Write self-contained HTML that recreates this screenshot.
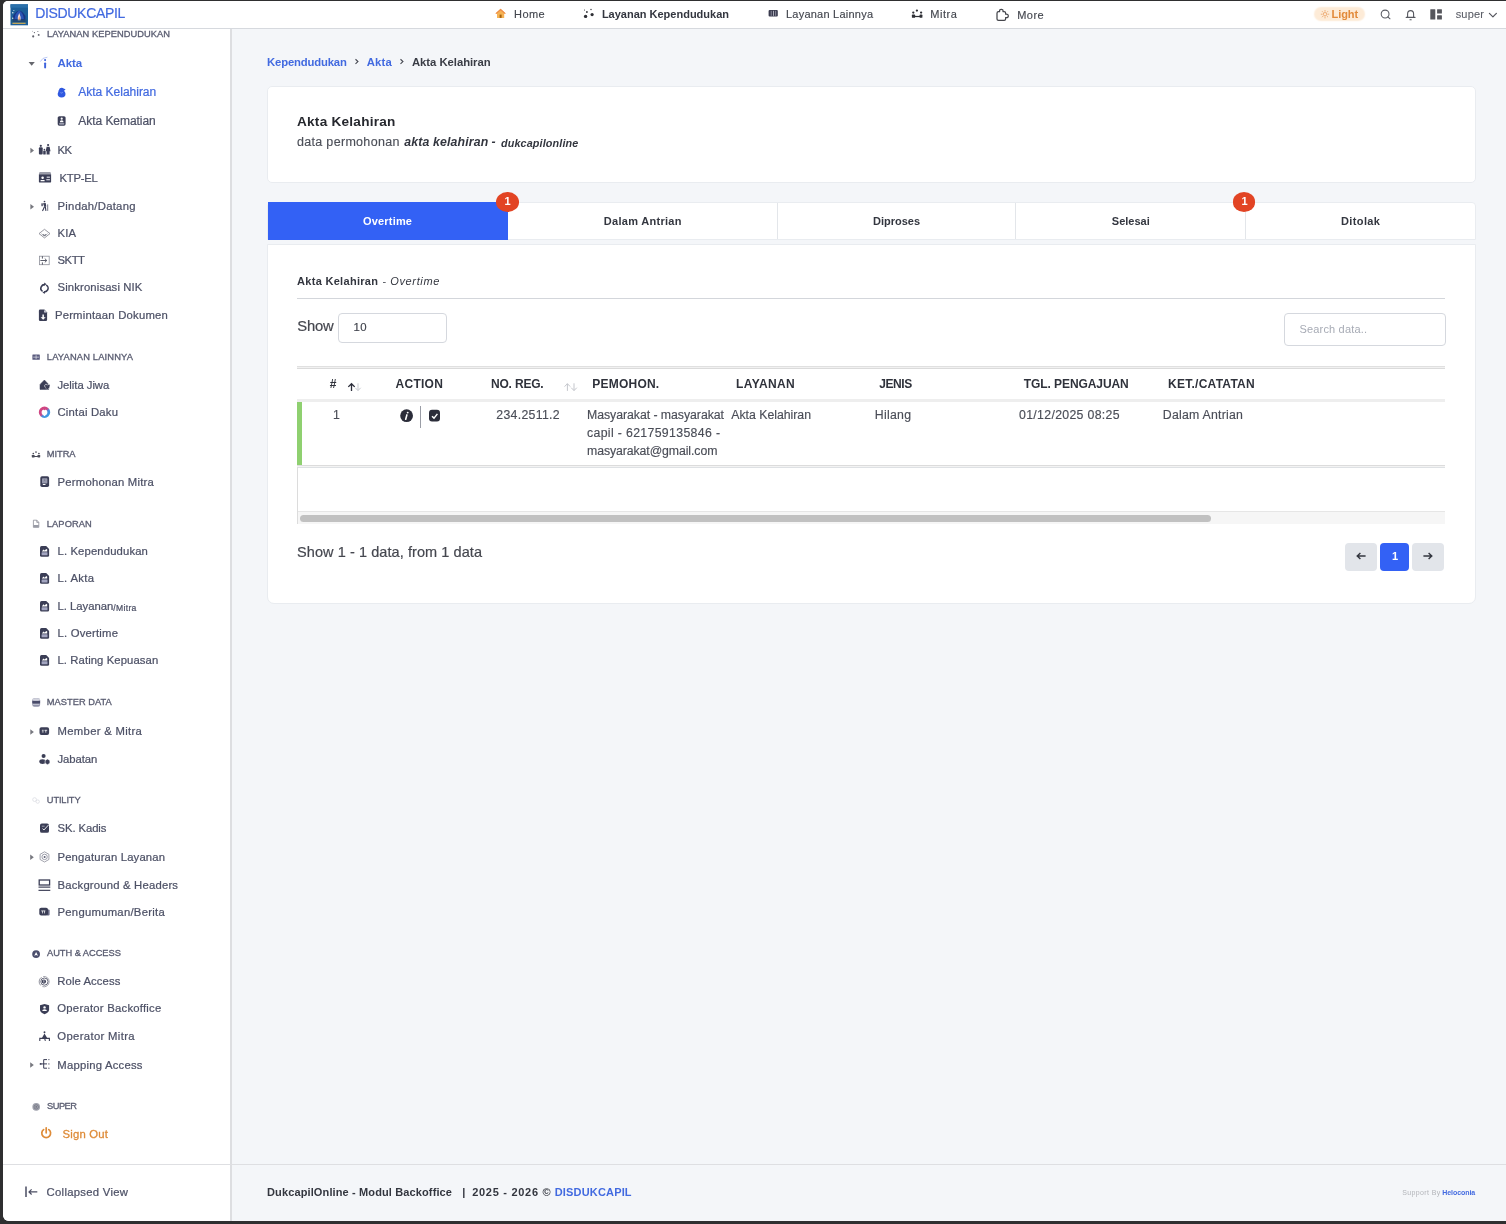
<!DOCTYPE html>
<html lang="id">
<head>
<meta charset="utf-8">
<title>Akta Kelahiran - DukcapilOnline Backoffice</title>
<style>
html,body{margin:0;padding:0;}
body{width:1506px;height:1224px;overflow:hidden;background:#2f2f30;font-family:"Liberation Sans",sans-serif;position:relative;}
#win{position:absolute;left:0;top:0;width:1506px;height:1224px;background:#f4f6f9;clip-path:inset(1px 0 3px 3px round 5px 0 0 6px);}
.b{position:absolute;box-sizing:border-box;}
.t{position:absolute;white-space:pre;display:block;}
svg{position:absolute;overflow:visible;}
</style>
</head>
<body>
<div id="win">
<!-- header -->
<div class="b" style="left:0;top:0;width:1506px;height:28px;background:#fff;"></div>
<div class="b" style="left:0;top:28px;width:1506px;height:1px;background:#d6d9de;"></div>
<!-- sidebar -->
<div class="b" style="left:0;top:29px;width:230px;height:1195px;background:#fff;"></div>
<div class="b" style="left:230px;top:29px;width:1.6px;height:1195px;background:#dddee1;"></div>
<div class="b" style="left:0;top:1164px;width:1506px;height:1px;background:#dedfe2;"></div>
<!-- card 1 -->
<div class="b" style="left:267px;top:86px;width:1209px;height:96.5px;background:#fff;border:1px solid #e9ecf0;border-radius:5px;"></div>
<!-- tabs -->
<div class="b" style="left:267px;top:202px;width:1209px;height:38px;background:#fff;border:1px solid #e9ecf0;border-radius:4px 4px 0 0;"></div>
<div class="b" style="left:268px;top:202.4px;width:239.5px;height:38px;background:#3361f5;"></div>
<div class="b" style="left:777px;top:203px;width:1px;height:36px;background:#e3e6ea;"></div>
<div class="b" style="left:1015px;top:203px;width:1px;height:36px;background:#e3e6ea;"></div>
<div class="b" style="left:1245px;top:203px;width:1px;height:36px;background:#e3e6ea;"></div>
<div class="b" style="left:496.2px;top:192.2px;width:22.6px;height:19.7px;border-radius:50%;background:#e24424;"></div>
<div class="b" style="left:1232.9px;top:192.2px;width:22.6px;height:19.7px;border-radius:50%;background:#e24424;"></div>
<!-- card 2 -->
<div class="b" style="left:267px;top:244px;width:1209px;height:360px;background:#fff;border:1px solid #e9ecf0;border-radius:0 0 7px 7px;"></div>
<div class="b" style="left:297px;top:298px;width:1148px;height:1px;background:#d3d6db;"></div>
<div class="b" style="left:338px;top:313px;width:109px;height:30px;background:#fff;border:1px solid #d5d8de;border-radius:4px;"></div>
<div class="b" style="left:1284px;top:313px;width:162px;height:33px;background:#fff;border:1px solid #d5d8de;border-radius:4px;"></div>
<!-- table -->
<div class="b" style="left:297px;top:366px;width:1148px;height:1px;background:#e0e0e0;"></div>
<div class="b" style="left:297px;top:367px;width:1148px;height:1px;background:#f1f1f1;"></div>
<div class="b" style="left:297px;top:368px;width:1148px;height:1px;background:#dbdbdb;"></div>
<div class="b" style="left:297px;top:399px;width:1148px;height:3px;background:#eeeeee;"></div>
<div class="b" style="left:297px;top:465px;width:1148px;height:1px;background:#dcdcdc;"></div>
<div class="b" style="left:297px;top:466px;width:1148px;height:1px;background:#f3f3f3;"></div>
<div class="b" style="left:297px;top:467px;width:1148px;height:1px;background:#dee1e4;"></div>
<div class="b" style="left:297px;top:402px;width:5px;height:63px;background:#8fd070;"></div>
<div class="b" style="left:297px;top:467px;width:1px;height:57px;background:#dcdcdc;"></div>
<div class="b" style="left:298px;top:511px;width:1147px;height:13px;background:#f6f6f6;border-top:1px solid #e6e6e6;"></div>
<div class="b" style="left:300px;top:515px;width:911px;height:7px;border-radius:4px;background:#c1c1c1;"></div>
<div class="b" style="left:420px;top:406px;width:1px;height:22px;background:#9a9da6;"></div>
<!-- pagination -->
<div class="b" style="left:1345px;top:543px;width:32px;height:27.5px;background:#e2e5ea;border-radius:4px;"></div>
<div class="b" style="left:1380px;top:543px;width:29px;height:27.5px;background:#3361f5;border-radius:4px;"></div>
<div class="b" style="left:1412px;top:543px;width:31.5px;height:27.5px;background:#e2e5ea;border-radius:4px;"></div>
<!-- light pill -->
<div class="b" style="left:1316px;top:9.4px;width:47.4px;height:9.2px;background:#fdebd7;border-radius:5px;box-shadow:0 0 1.5px 2px #fdebd7;"></div>
<svg width="1506" height="1224" viewBox="0 0 1506 1224" style="left:0;top:0;">
<!-- logo -->
<g>
<rect x="10.5" y="4.3" width="17.5" height="21" fill="#1d5f99"/>
<rect x="10.5" y="4.3" width="17.5" height="3.4" fill="#2a70aa"/>
<path d="M13 22 L13 16 Q19.2 5.5 25.4 16 L25.4 22 Z" fill="#1b3585"/>
<path d="M19.2 10.5 Q23.5 13 23.8 19 L14.6 19 Q14.9 13 19.2 10.5Z" fill="#2b55b5"/>
<path d="M19.2 13 Q21.2 17 20.6 20.5 L17.8 20.5 Q17.2 17 19.2 13Z" fill="#fbe3dc"/>
<path d="M19.2 16 Q20.2 18.5 19.9 20.5 L18.5 20.5 Q18.2 18.5 19.2 16Z" fill="#e8925a"/>
<rect x="12.4" y="22.6" width="13.2" height="1.4" fill="#c2a457"/>
<circle cx="12.8" cy="12.8" r="0.7" fill="#e8f0f5"/><circle cx="13.9" cy="10.4" r="0.5" fill="#e8f0f5"/><circle cx="12.7" cy="18.3" r="0.7" fill="#d8efd0"/>
<rect x="11.3" y="19.5" width="15.8" height="2.8" fill="#24546b" opacity=".6"/>
</g>
<!-- header: home -->
<g>
<path d="M495.6 13.2 L500.6 8.8 L505.6 13.2 L504.2 13.2 L504.2 17.9 L497 17.9 L497 13.2Z" fill="#f6b354"/>
<path d="M495.4 13.4 L500.6 8.8 L505.8 13.4 L504.8 13.9 L500.6 10.4 L496.4 13.9Z" fill="#ee8c4a"/>
<rect x="499.6" y="14.6" width="2" height="3.3" fill="#a6620f"/>
</g>
<!-- header: layanan kependudukan scatter -->
<g fill="#2f3036">
<circle cx="585.6" cy="16.4" r="1.7"/><circle cx="592.1" cy="14.6" r="1.6"/><circle cx="586.9" cy="12" r="0.9"/><circle cx="584.5" cy="10" r="0.55"/><circle cx="591" cy="9.5" r="0.7"/>
</g>
<!-- header: layanan lainnya -->
<g>
<rect x="768.6" y="10" width="9.2" height="6.5" rx="1" fill="#3a3b4e"/>
<rect x="770.8" y="10.8" width="0.7" height="5" fill="#a9aab8"/><rect x="773" y="10.8" width="0.8" height="5" fill="#c9cad4"/><rect x="775.4" y="10.8" width="0.7" height="5" fill="#a9aab8"/>
</g>
<!-- header: mitra -->
<g fill="#2f3036">
<circle cx="913.3" cy="12.6" r="1.15"/><circle cx="916.9" cy="10.6" r="1.15"/><circle cx="921.1" cy="12.6" r="1.15"/>
<rect x="911.9" y="14.6" width="3.2" height="3.2" rx=".6"/><rect x="919.6" y="14.6" width="2.8" height="3.2" rx=".6"/><rect x="913" y="15.9" width="8" height="1.2"/>
</g>
<!-- header: more (puzzle) -->
<path d="M997 19 L997 13.2 Q997 11.7 998.5 11.7 L999.6 11.7 Q999.2 9.3 1001.3 9.3 Q1003.4 9.3 1003 11.7 L1004.2 11.7 Q1005.6 11.7 1005.6 13.2 L1005.6 14.2 Q1008.3 13.8 1008.3 15.9 Q1008.3 18 1005.6 17.6 L1005.6 19 Q1005.6 20.4 1004.2 20.4 L998.5 20.4 Q997 20.4 997 19Z" fill="none" stroke="#45464c" stroke-width="1.25" stroke-linejoin="round"/>
<!-- header: sun -->
<g stroke="#eaa163" stroke-width=".8" fill="none">
<circle cx="1325" cy="14.2" r="1.7"/>
<path d="M1325 10v1.7M1325 16.7v1.7M1320.8 14.2h1.7M1327.5 14.2h1.7M1322 11.2l1.2 1.2M1326.8 16l1.2 1.2M1322 17.2l1.2-1.2M1326.8 12.4l1.2-1.2"/>
</g>
<!-- header: search -->
<g stroke="#5a5c63" stroke-width="1.05" fill="none" stroke-linecap="round"><circle cx="1385.1" cy="14" r="3.9"/><path d="M1387.9 16.8L1390 18.8"/></g>
<!-- header: bell -->
<g stroke="#55575e" stroke-width="1.1" fill="none" stroke-linecap="round" stroke-linejoin="round"><path d="M1406.2 17.4H1415M1407.6 17.4V14Q1407.6 10.6 1410.6 10.6Q1413.6 10.6 1413.6 14V17.4"/><path d="M1410 19.8h1.2"/></g>
<!-- header: grid -->
<g fill="#55565c"><rect x="1430.3" y="9.2" width="5" height="10.4" rx=".4"/><rect x="1437.1" y="9.2" width="4.8" height="4.4" rx=".4"/><rect x="1437.1" y="15.3" width="4.8" height="4.3" rx=".4"/></g>
<!-- header: chevron -->
<path d="M1489.4 13.3L1492.9 16.8L1496.4 13.3" fill="none" stroke="#55575e" stroke-width="1.2" stroke-linecap="round" stroke-linejoin="round"/>
<g fill="#5e5f6a"><circle cx="33.2" cy="36.4" r="1.05"/><circle cx="38.7" cy="34.9" r=".95"/><circle cx="34.4" cy="32.6" r=".65"/><circle cx="32.6" cy="31.2" r=".4"/><circle cx="37.9" cy="31.4" r=".5"/></g>
<path d="M28.6 62 L34.8 62 L31.7 65.7Z" fill="#66676d"/>
<path d="M40.3 61.6 Q42.2 57.4 47.4 57.2" fill="none" stroke="#8ea5ec" stroke-width=".6"/>
<circle cx="45.1" cy="60.1" r="1.05" fill="#3f63dd"/><rect x="44.15" y="62.5" width="1.95" height="5.9" rx=".8" fill="#3f63dd"/>
<g fill="#3059e0"><circle cx="61.7" cy="90.4" r="2.7"/><ellipse cx="61.6" cy="94.1" rx="3.9" ry="3.4"/><circle cx="64.6" cy="89.4" r=".7"/><circle cx="58.6" cy="91" r=".6"/></g><path d="M60.4 92.6 Q61.6 93.6 62.8 92.4" stroke="#9db3f5" stroke-width=".6" fill="none"/>
<rect x="57.7" y="116.2" width="7.9" height="9.5" rx="1.6" fill="#3b3e56"/><circle cx="61.7" cy="118.7" r="1.1" fill="#fff"/><path d="M59.8 122.2 Q59.8 120.3 61.7 120.3 Q63.6 120.3 63.6 122.2Z" fill="#fff"/><rect x="59.1" y="123.2" width="5.2" height="1.3" rx=".4" fill="#b9bbca"/>
<path d="M30.4 147.65 L34.0 150.4 L30.4 153.15Z" fill="#77787f"/>
<g fill="#3b3e56"><circle cx="40.8" cy="145.8" r="1.1"/><rect x="38.9" y="147.3" width="3.8" height="7.3" rx="1"/><circle cx="48.1" cy="145" r="1.1"/><path d="M46.6 146.7 h3 l.9 4.6 h-.9 v3.3 h-3 v-3.3 h-.9Z"/><circle cx="44.4" cy="149.7" r=".85"/><rect x="43.2" y="150.8" width="2.5" height="3.8" rx=".6"/></g>
<path d="M38.9 173.5 Q38.9 172.4 40.1 172.4 H49.9 Q51.1 172.4 51.1 173.5Z" fill="#3b3e56"/><path d="M38.9 174.3 H51.1 V181.4 Q51.1 182.6 49.9 182.6 H40.1 Q38.9 182.6 38.9 181.4Z" fill="#3b3e56"/><circle cx="42.6" cy="177.8" r="1.25" fill="#fff"/><rect x="40.5" y="180.1" width="4.2" height="1.1" rx=".5" fill="#fff"/><rect x="46.7" y="176.6" width="3.2" height="1.2" fill="#d6d7e0"/><rect x="46.3" y="179.2" width="3.6" height="1.1" fill="#e6e7ee"/>
<path d="M30.4 203.95 L34.0 206.7 L30.4 209.45Z" fill="#77787f"/>
<g fill="#3b3e56" stroke="#3b3e56"><circle cx="44.5" cy="201.5" r=".85" stroke="none"/><path d="M43 203.2 L45.7 203 L46.3 206.5 L44.3 206.8Z" stroke="none"/><rect x="41.3" y="203.2" width="1.6" height="3" rx=".4" stroke="none" fill="#5a5c70"/><path d="M44.6 206.4 L42.5 210.9M45.3 206.4 L45.9 210.9" stroke-width="1.1" fill="none"/><path d="M47.7 204.4 V210.9" stroke-width=".7" fill="none"/></g>
<path d="M39 233.6 L44.5 229.3 L50 233.6 L44.5 237.9Z" fill="none" stroke="#7d7f8a" stroke-width=".8" stroke-linejoin="round"/><path d="M41.6 233.6 Q44.5 238 47.4 233.6" fill="none" stroke="#8c8e98" stroke-width=".8"/><path d="M43.2 234.6 Q44.5 236 45.8 234.6" fill="none" stroke="#4b4d5e" stroke-width="1"/>
<rect x="39.4" y="256.2" width="9.8" height="8.5" fill="none" stroke="#8d8f99" stroke-width=".8"/><path d="M40.4 260.5 H46.6 M44.8 258.6 L46.8 260.5 L44.8 262.4 M42.4 256.2 V258.6 M42.4 262.4 V264.7" fill="none" stroke="#4a4c5a" stroke-width=".9"/>
<circle cx="44.5" cy="288.3" r="3.6" fill="none" stroke="#3b3e56" stroke-width="1.6" stroke-dasharray="9.7 1.61" transform="rotate(-62 44.5 288.3)"/><path d="M44.3 282.6 L46.6 284.3 L44 285.4Z M44.7 294 L42.4 292.3 L45 291.2Z" fill="#3b3e56"/>
<path d="M38.9 310.8 Q38.9 309.6 40.1 309.6 H44.4 L47.1 312.4 V319.7 Q47.1 320.9 45.9 320.9 H40.1 Q38.9 320.9 38.9 319.7Z" fill="#3b3e56"/><path d="M44.2 309.9 V312.6 H46.9Z" fill="#e3e4ec"/><path d="M42.4 314.6 H43.9 V317.2 H45.7 L43.15 319.8 L40.6 317.2 H42.4Z" fill="#fff"/>
<rect x="32.4" y="354.5" width="7.4" height="5.3" rx=".5" fill="#5a5b7e"/><path d="M33.2 357.15 H39 M36.1 355.2 V359.1" stroke="#e4e5ee" stroke-width=".7"/>
<path d="M40 384.5 L44.4 380 L48.7 384.4 V389.4 H40Z" fill="#3b3e56" stroke="#3b3e56" stroke-width=".5" stroke-linejoin="round"/><path d="M47.35 389.7 L44.9 386.9 Q44 385 45.6 384.3 Q46.7 384 47.35 385.2 Q48 384 49.1 384.3 Q50.7 385 49.8 386.9Z" fill="#3b3e56" stroke="#fff" stroke-width=".65"/><path d="M47.35 389.7 L45.2 387.1 L49.5 387.1Z" fill="#3b3e56"/>
<defs><linearGradient id="cg" x1="0" y1="0" x2="1" y2="1"><stop offset="0" stop-color="#d6407a"/><stop offset=".48" stop-color="#c64c8e"/><stop offset=".6" stop-color="#4a8ede"/><stop offset="1" stop-color="#38a0e6"/></linearGradient></defs><circle cx="44.5" cy="412.3" r="4.3" fill="#fff" stroke="url(#cg)" stroke-width="2.8"/><path d="M43.5 409 L44.5 410.6 L45.5 409Z" fill="#d2437c"/><path d="M42.7 414.5 L44.5 416.3 L46.3 414.5Z" fill="#fff"/>
<g fill="#4a4c58"><circle cx="33.3" cy="453.5" r=".85"/><circle cx="36" cy="452" r=".85"/><circle cx="38.9" cy="453.5" r=".85"/><rect x="31.8" y="455" width="2.8" height="2.4" rx=".4"/><rect x="37.5" y="455" width="2.7" height="2.4" rx=".4"/><rect x="33" y="456" width="6" height="1"/></g>
<rect x="40.3" y="476.3" width="8.8" height="10.7" rx="1.7" fill="#3b3e56"/><rect x="42" y="478.2" width="5.4" height="5.2" rx=".7" fill="#9799ad"/><rect x="42.7" y="483.9" width="2.9" height="1.2" rx=".5" fill="#fff"/><circle cx="44.7" cy="480" r=".6" fill="#5b5d72"/>
<path d="M33.4 520.2 H36.8 L38.8 522.4 V527.3 H33.4Z M36.8 520.2 V522.4 H38.8" fill="none" stroke="#8b8d97" stroke-width=".8" stroke-linejoin="round"/><rect x="33.4" y="525" width="5.4" height="2.3" fill="#9a9ca6"/>
<path d="M40 547.5 Q40 546.0 41.5 546.0 H46.2 L49.1 548.9 V555.2 Q49.1 556.7 47.6 556.7 H41.5 Q40 556.7 40 555.2Z" fill="#3b3e56"/><path d="M41.8 551.5 L43.5 549.4 L44.7 550.6 L46.2 548.9 L47.2 549.6 V551.5Z" fill="#fff"/><rect x="41.6" y="552.3" width="5.9" height="3" rx=".5" fill="#a3a5c0"/>
<path d="M40 574.6 Q40 573.1 41.5 573.1 H46.2 L49.1 576.0 V582.3 Q49.1 583.8 47.6 583.8 H41.5 Q40 583.8 40 582.3Z" fill="#3b3e56"/><path d="M41.8 578.6 L43.5 576.5 L44.7 577.7 L46.2 576.0 L47.2 576.7 V578.6Z" fill="#fff"/><rect x="41.6" y="579.4" width="5.9" height="3" rx=".5" fill="#a3a5c0"/>
<path d="M40 602.4 Q40 600.9 41.5 600.9 H46.2 L49.1 603.8 V610.1 Q49.1 611.6 47.6 611.6 H41.5 Q40 611.6 40 610.1Z" fill="#3b3e56"/><path d="M41.8 606.4 L43.5 604.3 L44.7 605.5 L46.2 603.8 L47.2 604.5 V606.4Z" fill="#fff"/><rect x="41.6" y="607.2" width="5.9" height="3" rx=".5" fill="#a3a5c0"/>
<path d="M40 629.5 Q40 628.0 41.5 628.0 H46.2 L49.1 630.9 V637.2 Q49.1 638.7 47.6 638.7 H41.5 Q40 638.7 40 637.2Z" fill="#3b3e56"/><path d="M41.8 633.5 L43.5 631.4 L44.7 632.6 L46.2 630.9 L47.2 631.6 V633.5Z" fill="#fff"/><rect x="41.6" y="634.3" width="5.9" height="3" rx=".5" fill="#a3a5c0"/>
<path d="M40 656.5 Q40 655.0 41.5 655.0 H46.2 L49.1 657.9 V664.2 Q49.1 665.7 47.6 665.7 H41.5 Q40 665.7 40 664.2Z" fill="#3b3e56"/><path d="M41.8 660.5 L43.5 658.4 L44.7 659.6 L46.2 657.9 L47.2 658.6 V660.5Z" fill="#fff"/><rect x="41.6" y="661.3" width="5.9" height="3" rx=".5" fill="#a3a5c0"/>
<rect x="32.3" y="698.3" width="7.8" height="8.4" rx="2" fill="#9092a9"/><ellipse cx="36.2" cy="699.7" rx="3.9" ry="1.4" fill="#d3d4de"/><rect x="32.3" y="700.9" width="7.8" height="2.5" fill="#494b69"/><rect x="33" y="704" width="6.4" height=".7" fill="#d3d4de"/>
<path d="M30.299999999999997 729.25 L33.9 732 L30.299999999999997 734.75Z" fill="#77787f"/>
<rect x="39.5" y="727.2" width="9.6" height="7.8" rx="1.9" fill="#3b3e56"/><path d="M41.9 730.3 H43.7 M41.9 731.9 H43.7 M44.5 730.3 H47.2 M45.8 730.3 V732.6" stroke="#fff" stroke-width=".8"/>
<circle cx="43.6" cy="756" r="2.05" fill="#3b3e56"/><ellipse cx="42.5" cy="761.6" rx="3.2" ry="2.3" fill="#3b3e56"/><path d="M47.5 759 L49.9 760.4 V763.3 L47.5 764.7 L45.1 763.3 V760.4Z" fill="#3b3e56" stroke="#fff" stroke-width=".6"/>
<g fill="none" stroke="#dcdde3" stroke-width=".8"><circle cx="34.6" cy="799.6" r="1.9"/><circle cx="37.7" cy="801.6" r="1.7"/></g>
<rect x="40" y="823.4" width="9" height="9.4" rx="1.9" fill="#3b3e56"/><path d="M41.8 826.2 H44.6" stroke="#c9cad6" stroke-width=".7"/><path d="M42.6 828.6 L43.9 830 L48.6 824.9" fill="none" stroke="#fff" stroke-width=".9"/>
<path d="M30.2 854.55 L33.8 857.3 L30.2 860.05Z" fill="#77787f"/>
<path d="M44.5 851.8 L48.9 854.3 V859.5 L44.5 862 L40.1 859.5 V854.3Z" fill="none" stroke="#8a8c98" stroke-width=".8"/><circle cx="44.6" cy="856.9" r="2.7" fill="none" stroke="#77798a" stroke-width=".7"/><circle cx="44.6" cy="856.9" r="1" fill="#5b5d70"/>
<rect x="39.2" y="880" width="10.4" height="5" fill="none" stroke="#3b3e56" stroke-width="1.3"/><path d="M38.5 887.2 H50.3 M38.5 890.3 H50.3" stroke="#4a4c62" stroke-width="1.2"/>
<rect x="46.4" y="909.4" width="3.2" height="6.1" rx="1.1" fill="#6a6c86"/><rect x="39.3" y="907.7" width="8.7" height="7.8" rx="1.9" fill="#3b3e56"/><path d="M41.2 910.9 H45.4 M42.5 910.9 V913.4 M44.5 910.9 V913.4" stroke="#fff" stroke-width=".7"/>
<circle cx="36.1" cy="954.1" r="3.9" fill="#4b4e6c"/><path d="M36.1 951.9 L38 955.7 L36.1 954.9 L34.2 955.7Z" fill="#fff"/>
<g fill="none"><path d="M40.6 985.4 A5.4 5.4 0 0 1 41.6 977.2" stroke="#777987" stroke-width=".8"/><path d="M43.2 976.5 A5.2 5.2 0 1 1 42.4 986.6" stroke="#8a8c98" stroke-width=".8"/><circle cx="44.4" cy="981.6" r="3.6" stroke="#56586b" stroke-width=".9"/></g><circle cx="43.9" cy="981.6" r="2.15" fill="#3b3e56"/><rect x="43.55" y="980.2" width=".7" height="2" fill="#fff"/><rect x="43.55" y="982.5" width=".7" height=".6" fill="#fff"/>
<path d="M40 1005.2 L44.55 1003.9 L49.1 1005.2 V1009.6 Q49.1 1012.6 44.55 1014.2 Q40 1012.6 40 1009.6Z" fill="#3b3e56"/><circle cx="44.55" cy="1007.4" r="1.2" fill="#fff"/><path d="M42.2 1011.1 Q42.2 1009.3 44.55 1009.3 Q46.9 1009.3 46.9 1011.1Z" fill="#fff"/>
<circle cx="44.5" cy="1032.2" r=".95" fill="#3b3e56"/><path d="M44.5 1033.6 L41.8 1038.2 H47.3Z" fill="#3b3e56"/><path d="M39.8 1040.9 V1038.4 H49.4 V1040.9 M44.6 1038.4 L45.4 1040.9" fill="none" stroke="#3b3e56" stroke-width="1.1"/>
<path d="M30.2 1062.25 L33.8 1065 L30.2 1067.75Z" fill="#77787f"/>
<circle cx="40.6" cy="1063.9" r=".95" fill="#3b3e56"/><path d="M40.6 1063.9 H47 M43.7 1059.6 V1068.2 M43.7 1059.6 H47 M43.7 1068.2 H47" fill="none" stroke="#3b3e56" stroke-width="1"/><g fill="#3b3e56"><circle cx="48.9" cy="1059.6" r=".6"/><circle cx="48.9" cy="1063.9" r=".6"/><circle cx="48.9" cy="1068.2" r=".6"/></g>
<circle cx="36.2" cy="1106.9" r="3.8" fill="#a0a2ad"/><circle cx="36.2" cy="1106.9" r="2.2" fill="none" stroke="#70727f" stroke-width=".7"/><circle cx="36.2" cy="1106.9" r=".8" fill="#70727f"/>
<path d="M43.6 1129.6 A4.4 4.4 0 1 0 48.8 1129.6 M46.2 1127.8 V1132.8" fill="none" stroke="#de8b38" stroke-width="1.7" stroke-linecap="round"/>
<path d="M26 1186.6 V1196.9" stroke="#4a4c62" stroke-width="1.5"/><path d="M29 1191.9 H37.3 M31.6 1189.3 L29 1191.9 L31.6 1194.5" fill="none" stroke="#4a4c62" stroke-width="1.2"/>
<path d="M355.5 59.3 L357.9 61.6 L355.5 63.9" fill="none" stroke="#4c4e57" stroke-width="1.2"/>
<path d="M400.5 59.3 L402.9 61.6 L400.5 63.9" fill="none" stroke="#4c4e57" stroke-width="1.2"/>
<path d="M351.5 383.8 V390.9 M348.3 386.9 L351.5 383.7 L354.7 386.9" fill="none" stroke="#2b2d3a" stroke-width="1.3"/>
<path d="M358 383.3 V390.5 M355.3 387.8 L358 390.6 L360.7 387.8" fill="none" stroke="#c9cbd1" stroke-width="1"/>
<path d="M567.4 383.7 V390.9 M564.6 386.6 L567.4 383.7 L570.2 386.6" fill="none" stroke="#c4c6cc" stroke-width="1"/>
<path d="M574 383.3 V390.5 M571.2 387.7 L574 390.6 L576.8 387.7" fill="none" stroke="#c4c6cc" stroke-width="1"/>
<circle cx="406.6" cy="415.7" r="6.4" fill="#2b2d3a"/><circle cx="407.7" cy="412.6" r=".95" fill="#fff"/><path d="M406.9 414.9 L405.7 419.2" stroke="#fff" stroke-width="1.6" stroke-linecap="round"/>
<rect x="429" y="409.8" width="11" height="11.8" rx="3" fill="#2b2d3a"/><path d="M432 416.2 L434 418.1 L437.4 413.9" fill="none" stroke="#fff" stroke-width="1.4"/>
<path d="M1357.2 556 H1365.6 M1360.4 552.9 L1357.2 556 L1360.4 559.1" fill="none" stroke="#33363f" stroke-width="1.4"/>
<path d="M1423.4 556 H1431.8 M1428.6 552.9 L1431.8 556 L1428.6 559.1" fill="none" stroke="#33363f" stroke-width="1.4"/>
</svg>

<div style="position:absolute;left:0;top:0;width:1506px;height:1224px;opacity:.999;will-change:opacity;">
<span class="t" style="left:35.2px;top:3.9px;height:18px;line-height:18px;font-size:14px;font-weight:400;color:#426ae0;letter-spacing:-0.326px;-webkit-text-stroke:0.2px #426ae0;">DISDUKCAPIL</span>
<span class="t" style="left:514.1px;top:7.0px;height:14px;line-height:14px;font-size:11px;font-weight:400;color:#44474f;letter-spacing:0.419px;-webkit-text-stroke:0.15px #44474f;">Home</span>
<span class="t" style="left:601.9px;top:7.0px;height:14px;line-height:14px;font-size:11px;font-weight:700;color:#33363f;letter-spacing:-0.002px;">Layanan Kependudukan</span>
<span class="t" style="left:786.0px;top:7.0px;height:14px;line-height:14px;font-size:11px;font-weight:400;color:#44474f;letter-spacing:0.229px;-webkit-text-stroke:0.15px #44474f;">Layanan Lainnya</span>
<span class="t" style="left:930.3px;top:7.0px;height:14px;line-height:14px;font-size:11px;font-weight:400;color:#44474f;letter-spacing:0.537px;-webkit-text-stroke:0.15px #44474f;">Mitra</span>
<span class="t" style="left:1017.3px;top:7.9px;height:14px;line-height:14px;font-size:11px;font-weight:400;color:#44474f;letter-spacing:0.412px;-webkit-text-stroke:0.15px #44474f;">More</span>
<span class="t" style="left:1331.6px;top:7.0px;height:14px;line-height:14px;font-size:11px;font-weight:700;color:#e28a3a;letter-spacing:-0.073px;">Light</span>
<span class="t" style="left:1455.7px;top:6.7px;height:14px;line-height:14px;font-size:11px;font-weight:400;color:#5a5d66;letter-spacing:0.167px;-webkit-text-stroke:0.1px #5a5d66;">super</span>
<span class="t" style="left:47.0px;top:27.8px;height:12px;line-height:12px;font-size:9.3px;font-weight:400;color:#5a5d71;letter-spacing:0.048px;-webkit-text-stroke:0.32px #5a5d71;">LAYANAN KEPENDUDUKAN</span>
<span class="t" style="left:57.5px;top:55.9px;height:15px;line-height:15px;font-size:11.5px;font-weight:700;color:#426ae0;letter-spacing:-0.079px;">Akta</span>
<span class="t" style="left:78.3px;top:84.2px;height:16px;line-height:16px;font-size:12px;font-weight:400;color:#426ae0;letter-spacing:-0.011px;-webkit-text-stroke:0.22px #426ae0;">Akta Kelahiran</span>
<span class="t" style="left:78.3px;top:112.8px;height:16px;line-height:16px;font-size:12px;font-weight:400;color:#4d5166;letter-spacing:-0.046px;-webkit-text-stroke:0.22px #4d5166;">Akta Kematian</span>
<span class="t" style="left:57.5px;top:142.7px;height:15px;line-height:15px;font-size:11.3px;font-weight:400;color:#4d5166;letter-spacing:-0.578px;-webkit-text-stroke:0.22px #4d5166;">KK</span>
<span class="t" style="left:59.5px;top:170.5px;height:15px;line-height:15px;font-size:11.3px;font-weight:400;color:#4d5166;letter-spacing:-0.253px;-webkit-text-stroke:0.22px #4d5166;">KTP-EL</span>
<span class="t" style="left:57.5px;top:199.2px;height:15px;line-height:15px;font-size:11.3px;font-weight:400;color:#4d5166;letter-spacing:0.271px;-webkit-text-stroke:0.22px #4d5166;">Pindah/Datang</span>
<span class="t" style="left:57.5px;top:226.3px;height:15px;line-height:15px;font-size:11.3px;font-weight:400;color:#4d5166;letter-spacing:0.141px;-webkit-text-stroke:0.22px #4d5166;">KIA</span>
<span class="t" style="left:57.5px;top:253.2px;height:15px;line-height:15px;font-size:11.3px;font-weight:400;color:#4d5166;letter-spacing:-0.458px;-webkit-text-stroke:0.22px #4d5166;">SKTT</span>
<span class="t" style="left:57.5px;top:280.3px;height:15px;line-height:15px;font-size:11.3px;font-weight:400;color:#4d5166;letter-spacing:0.135px;-webkit-text-stroke:0.22px #4d5166;">Sinkronisasi NIK</span>
<span class="t" style="left:54.9px;top:308.3px;height:15px;line-height:15px;font-size:11.3px;font-weight:400;color:#4d5166;letter-spacing:0.214px;-webkit-text-stroke:0.22px #4d5166;">Permintaan Dokumen</span>
<span class="t" style="left:46.8px;top:350.8px;height:12px;line-height:12px;font-size:9.3px;font-weight:400;color:#5a5d71;letter-spacing:0.178px;-webkit-text-stroke:0.32px #5a5d71;">LAYANAN LAINNYA</span>
<span class="t" style="left:57.5px;top:377.5px;height:15px;line-height:15px;font-size:11.3px;font-weight:400;color:#4d5166;letter-spacing:-0.033px;-webkit-text-stroke:0.22px #4d5166;">Jelita Jiwa</span>
<span class="t" style="left:57.5px;top:404.5px;height:15px;line-height:15px;font-size:11.3px;font-weight:400;color:#4d5166;letter-spacing:0.209px;-webkit-text-stroke:0.22px #4d5166;">Cintai Daku</span>
<span class="t" style="left:46.8px;top:448.0px;height:12px;line-height:12px;font-size:9.3px;font-weight:400;color:#5a5d71;letter-spacing:-0.055px;-webkit-text-stroke:0.32px #5a5d71;">MITRA</span>
<span class="t" style="left:57.5px;top:474.5px;height:15px;line-height:15px;font-size:11.3px;font-weight:400;color:#4d5166;letter-spacing:0.231px;-webkit-text-stroke:0.22px #4d5166;">Permohonan Mitra</span>
<span class="t" style="left:46.8px;top:517.5px;height:12px;line-height:12px;font-size:9.3px;font-weight:400;color:#5a5d71;letter-spacing:0.094px;-webkit-text-stroke:0.32px #5a5d71;">LAPORAN</span>
<span class="t" style="left:57.5px;top:543.9px;height:15px;line-height:15px;font-size:11.3px;font-weight:400;color:#4d5166;letter-spacing:0.13px;-webkit-text-stroke:0.22px #4d5166;">L. Kependudukan</span>
<span class="t" style="left:57.5px;top:571.0px;height:15px;line-height:15px;font-size:11.3px;font-weight:400;color:#4d5166;letter-spacing:0.326px;-webkit-text-stroke:0.22px #4d5166;">L. Akta</span>
<span class="t" style="left:57.5px;top:598.8px;height:15px;line-height:15px;font-size:11.3px;font-weight:400;color:#4d5166;letter-spacing:-0.023px;-webkit-text-stroke:0.22px #4d5166;">L. Layanan</span>
<span class="t" style="left:113.2px;top:602.8px;height:11px;line-height:11px;font-size:8.6px;font-weight:400;color:#4d5166;letter-spacing:0.343px;-webkit-text-stroke:0.22px #4d5166;">/Mitra</span>
<span class="t" style="left:57.5px;top:625.9px;height:15px;line-height:15px;font-size:11.3px;font-weight:400;color:#4d5166;letter-spacing:0.211px;-webkit-text-stroke:0.22px #4d5166;">L. Overtime</span>
<span class="t" style="left:57.5px;top:652.9px;height:15px;line-height:15px;font-size:11.3px;font-weight:400;color:#4d5166;letter-spacing:0.086px;-webkit-text-stroke:0.22px #4d5166;">L. Rating Kepuasan</span>
<span class="t" style="left:46.8px;top:696.4px;height:12px;line-height:12px;font-size:9.3px;font-weight:400;color:#5a5d71;letter-spacing:0.025px;-webkit-text-stroke:0.32px #5a5d71;">MASTER DATA</span>
<span class="t" style="left:57.5px;top:723.7px;height:15px;line-height:15px;font-size:11.3px;font-weight:400;color:#4d5166;letter-spacing:0.311px;-webkit-text-stroke:0.22px #4d5166;">Member &amp; Mitra</span>
<span class="t" style="left:57.5px;top:751.7px;height:15px;line-height:15px;font-size:11.3px;font-weight:400;color:#4d5166;letter-spacing:-0.067px;-webkit-text-stroke:0.22px #4d5166;">Jabatan</span>
<span class="t" style="left:46.8px;top:794.4px;height:12px;line-height:12px;font-size:9.3px;font-weight:400;color:#5a5d71;letter-spacing:-0.135px;-webkit-text-stroke:0.32px #5a5d71;">UTILITY</span>
<span class="t" style="left:57.5px;top:821.2px;height:15px;line-height:15px;font-size:11.3px;font-weight:400;color:#4d5166;letter-spacing:-0.089px;-webkit-text-stroke:0.22px #4d5166;">SK. Kadis</span>
<span class="t" style="left:57.5px;top:850.0px;height:15px;line-height:15px;font-size:11.3px;font-weight:400;color:#4d5166;letter-spacing:0.153px;-webkit-text-stroke:0.22px #4d5166;">Pengaturan Layanan</span>
<span class="t" style="left:57.5px;top:877.8px;height:15px;line-height:15px;font-size:11.3px;font-weight:400;color:#4d5166;letter-spacing:0.194px;-webkit-text-stroke:0.22px #4d5166;">Background &amp; Headers</span>
<span class="t" style="left:57.5px;top:904.5px;height:15px;line-height:15px;font-size:11.3px;font-weight:400;color:#4d5166;letter-spacing:0.262px;-webkit-text-stroke:0.22px #4d5166;">Pengumuman/Berita</span>
<span class="t" style="left:47.0px;top:947.4px;height:12px;line-height:12px;font-size:9.3px;font-weight:400;color:#5a5d71;letter-spacing:-0.042px;-webkit-text-stroke:0.32px #5a5d71;">AUTH &amp; ACCESS</span>
<span class="t" style="left:57.3px;top:974.1px;height:15px;line-height:15px;font-size:11.3px;font-weight:400;color:#4d5166;letter-spacing:0.083px;-webkit-text-stroke:0.22px #4d5166;">Role Access</span>
<span class="t" style="left:57.3px;top:1001.2px;height:15px;line-height:15px;font-size:11.3px;font-weight:400;color:#4d5166;letter-spacing:0.242px;-webkit-text-stroke:0.22px #4d5166;">Operator Backoffice</span>
<span class="t" style="left:57.3px;top:1029.0px;height:15px;line-height:15px;font-size:11.3px;font-weight:400;color:#4d5166;letter-spacing:0.344px;-webkit-text-stroke:0.22px #4d5166;">Operator Mitra</span>
<span class="t" style="left:57.3px;top:1057.8px;height:15px;line-height:15px;font-size:11.3px;font-weight:400;color:#4d5166;letter-spacing:0.226px;-webkit-text-stroke:0.22px #4d5166;">Mapping Access</span>
<span class="t" style="left:47.0px;top:1100.4px;height:12px;line-height:12px;font-size:9.3px;font-weight:400;color:#5a5d71;letter-spacing:-0.508px;-webkit-text-stroke:0.32px #5a5d71;">SUPER</span>
<span class="t" style="left:62.4px;top:1126.7px;height:15px;line-height:15px;font-size:11.3px;font-weight:400;color:#de8b38;letter-spacing:0.233px;-webkit-text-stroke:0.3px #de8b38;">Sign Out</span>
<span class="t" style="left:46.6px;top:1184.8px;height:15px;line-height:15px;font-size:11.3px;font-weight:400;color:#4d5166;letter-spacing:0.287px;-webkit-text-stroke:0.22px #4d5166;">Collapsed View</span>
<span class="t" style="left:267.1px;top:54.5px;height:15px;line-height:15px;font-size:11.3px;font-weight:700;color:#426ae0;letter-spacing:-0.172px;">Kependudukan</span>
<span class="t" style="left:366.7px;top:54.5px;height:15px;line-height:15px;font-size:11.3px;font-weight:700;color:#426ae0;letter-spacing:0.2px;">Akta</span>
<span class="t" style="left:412.0px;top:54.5px;height:15px;line-height:15px;font-size:11.3px;font-weight:700;color:#3a3d46;letter-spacing:-0.039px;">Akta Kelahiran</span>
<span class="t" style="left:297.0px;top:112.8px;height:18px;line-height:18px;font-size:13.6px;font-weight:700;color:#26282e;letter-spacing:0.246px;">Akta Kelahiran</span>
<span class="t" style="left:297.0px;top:134.1px;height:16px;line-height:16px;font-size:12.5px;font-weight:400;color:#4c4f58;letter-spacing:0.314px;-webkit-text-stroke:0.15px #4c4f58;">data permohonan</span>
<span class="t" style="left:404.2px;top:134.1px;height:16px;line-height:16px;font-size:12.3px;font-weight:700;color:#33363f;letter-spacing:0.151px;font-style:italic;">akta kelahiran</span>
<span class="t" style="left:491.5px;top:134.1px;height:16px;line-height:16px;font-size:12.3px;font-weight:700;color:#33363f;letter-spacing:0px;font-style:italic;">-</span>
<span class="t" style="left:501.0px;top:135.6px;height:14px;line-height:14px;font-size:10.8px;font-weight:700;color:#33363f;letter-spacing:0.131px;font-style:italic;">dukcapilonline</span>
<span class="t" style="left:363.0px;top:214.3px;height:14px;line-height:14px;font-size:11px;font-weight:700;color:#ffffff;letter-spacing:0.185px;">Overtime</span>
<span class="t" style="left:603.8px;top:214.3px;height:14px;line-height:14px;font-size:11px;font-weight:700;color:#33363f;letter-spacing:0.294px;">Dalam Antrian</span>
<span class="t" style="left:873.0px;top:214.3px;height:14px;line-height:14px;font-size:11px;font-weight:700;color:#33363f;letter-spacing:-0.011px;">Diproses</span>
<span class="t" style="left:1111.8px;top:214.3px;height:14px;line-height:14px;font-size:11px;font-weight:700;color:#33363f;letter-spacing:-0.004px;">Selesai</span>
<span class="t" style="left:1341.0px;top:214.3px;height:14px;line-height:14px;font-size:11px;font-weight:700;color:#33363f;letter-spacing:0.385px;">Ditolak</span>
<span class="t" style="left:504.6px;top:194.0px;height:14px;line-height:14px;font-size:11px;font-weight:700;color:#ffffff;letter-spacing:0px;">1</span>
<span class="t" style="left:1241.4px;top:194.0px;height:14px;line-height:14px;font-size:11px;font-weight:700;color:#ffffff;letter-spacing:0px;">1</span>
<span class="t" style="left:297.0px;top:274.2px;height:14px;line-height:14px;font-size:11px;font-weight:700;color:#33363f;letter-spacing:0.305px;">Akta Kelahiran</span>
<span class="t" style="left:382.5px;top:274.2px;height:14px;line-height:14px;font-size:11px;font-weight:400;color:#4c4f58;letter-spacing:0px;">-</span>
<span class="t" style="left:390.3px;top:274.2px;height:14px;line-height:14px;font-size:11px;font-weight:400;color:#33363f;letter-spacing:0.625px;font-style:italic;">Overtime</span>
<span class="t" style="left:297.3px;top:316.7px;height:19px;line-height:19px;font-size:14.8px;font-weight:400;color:#45474f;letter-spacing:-0.239px;-webkit-text-stroke:0.2px #45474f;">Show</span>
<span class="t" style="left:353.4px;top:319.7px;height:15px;line-height:15px;font-size:11.4px;font-weight:400;color:#3f424b;letter-spacing:0.428px;-webkit-text-stroke:0.15px #3f424b;">10</span>
<span class="t" style="left:1299.5px;top:322.0px;height:14px;line-height:14px;font-size:11px;font-weight:400;color:#a7abb5;letter-spacing:0.172px;">Search data..</span>
<span class="t" style="left:329.7px;top:376.2px;height:16px;line-height:16px;font-size:12px;font-weight:700;color:#2f323b;letter-spacing:0px;">#</span>
<span class="t" style="left:395.5px;top:376.2px;height:16px;line-height:16px;font-size:12px;font-weight:700;color:#2f323b;letter-spacing:0.28px;">ACTION</span>
<span class="t" style="left:491.0px;top:376.2px;height:16px;line-height:16px;font-size:12px;font-weight:700;color:#2f323b;letter-spacing:-0.188px;">NO. REG.</span>
<span class="t" style="left:592.3px;top:376.2px;height:16px;line-height:16px;font-size:12px;font-weight:700;color:#2f323b;letter-spacing:0.222px;">PEMOHON.</span>
<span class="t" style="left:736.0px;top:376.2px;height:16px;line-height:16px;font-size:12px;font-weight:700;color:#2f323b;letter-spacing:0.372px;">LAYANAN</span>
<span class="t" style="left:879.2px;top:376.2px;height:16px;line-height:16px;font-size:12px;font-weight:700;color:#2f323b;letter-spacing:-0.397px;">JENIS</span>
<span class="t" style="left:1023.8px;top:376.2px;height:16px;line-height:16px;font-size:12px;font-weight:700;color:#2f323b;letter-spacing:-0.078px;">TGL. PENGAJUAN</span>
<span class="t" style="left:1168.0px;top:376.2px;height:16px;line-height:16px;font-size:12px;font-weight:700;color:#2f323b;letter-spacing:0.267px;">KET./CATATAN</span>
<span class="t" style="left:333.0px;top:406.5px;height:16px;line-height:16px;font-size:12.3px;font-weight:400;color:#4a4d57;letter-spacing:0px;-webkit-text-stroke:0.15px #4a4d57;">1</span>
<span class="t" style="left:496.3px;top:406.5px;height:16px;line-height:16px;font-size:12.3px;font-weight:400;color:#4a4d57;letter-spacing:0.295px;-webkit-text-stroke:0.15px #4a4d57;">234.2511.2</span>
<span class="t" style="left:587.0px;top:406.5px;height:16px;line-height:16px;font-size:12.3px;font-weight:400;color:#4a4d57;letter-spacing:-0.048px;-webkit-text-stroke:0.15px #4a4d57;">Masyarakat - masyarakat</span>
<span class="t" style="left:587.0px;top:424.7px;height:16px;line-height:16px;font-size:12.3px;font-weight:400;color:#4a4d57;letter-spacing:0.342px;-webkit-text-stroke:0.15px #4a4d57;">capil - 621759135846 -</span>
<span class="t" style="left:587.0px;top:443.2px;height:16px;line-height:16px;font-size:12.3px;font-weight:400;color:#4a4d57;letter-spacing:-0.088px;-webkit-text-stroke:0.15px #4a4d57;">masyarakat@gmail.com</span>
<span class="t" style="left:731.3px;top:406.5px;height:16px;line-height:16px;font-size:12.3px;font-weight:400;color:#4a4d57;letter-spacing:-0.022px;-webkit-text-stroke:0.15px #4a4d57;">Akta Kelahiran</span>
<span class="t" style="left:874.8px;top:406.5px;height:16px;line-height:16px;font-size:12.3px;font-weight:400;color:#4a4d57;letter-spacing:0.265px;-webkit-text-stroke:0.15px #4a4d57;">Hilang</span>
<span class="t" style="left:1019.0px;top:406.5px;height:16px;line-height:16px;font-size:12.3px;font-weight:400;color:#4a4d57;letter-spacing:0.324px;-webkit-text-stroke:0.15px #4a4d57;">01/12/2025 08:25</span>
<span class="t" style="left:1162.8px;top:406.5px;height:16px;line-height:16px;font-size:12.3px;font-weight:400;color:#4a4d57;letter-spacing:0.239px;-webkit-text-stroke:0.15px #4a4d57;">Dalam Antrian</span>
<span class="t" style="left:297.0px;top:542.9px;height:19px;line-height:19px;font-size:14.5px;font-weight:400;color:#45474f;letter-spacing:0.075px;-webkit-text-stroke:0.2px #45474f;">Show 1 - 1 data, from 1 data</span>
<span class="t" style="left:1392.0px;top:548.6px;height:14px;line-height:14px;font-size:11px;font-weight:700;color:#ffffff;letter-spacing:0px;">1</span>
<span class="t" style="left:267.0px;top:1185.2px;height:14px;line-height:14px;font-size:11px;font-weight:700;color:#33363f;letter-spacing:0.127px;">DukcapilOnline - Modul Backoffice</span>
<span class="t" style="left:462.3px;top:1185.0px;height:14px;line-height:14px;font-size:11px;font-weight:700;color:#33363f;letter-spacing:0px;">|</span>
<span class="t" style="left:472.2px;top:1185.2px;height:14px;line-height:14px;font-size:11px;font-weight:700;color:#33363f;letter-spacing:0.717px;">2025 - 2026 ©</span>
<span class="t" style="left:554.7px;top:1185.2px;height:14px;line-height:14px;font-size:11px;font-weight:700;color:#426ae0;letter-spacing:0.173px;">DISDUKCAPIL</span>
<span class="t" style="left:1402.3px;top:1188.2px;height:9px;line-height:9px;font-size:7px;font-weight:400;color:#b3b5ba;letter-spacing:0.362px;">Support By</span>
<span class="t" style="left:1442.2px;top:1188.2px;height:9px;line-height:9px;font-size:7px;font-weight:700;color:#426ae0;letter-spacing:-0.057px;">Heloconia</span>
</div>
</div>
</body>
</html>
